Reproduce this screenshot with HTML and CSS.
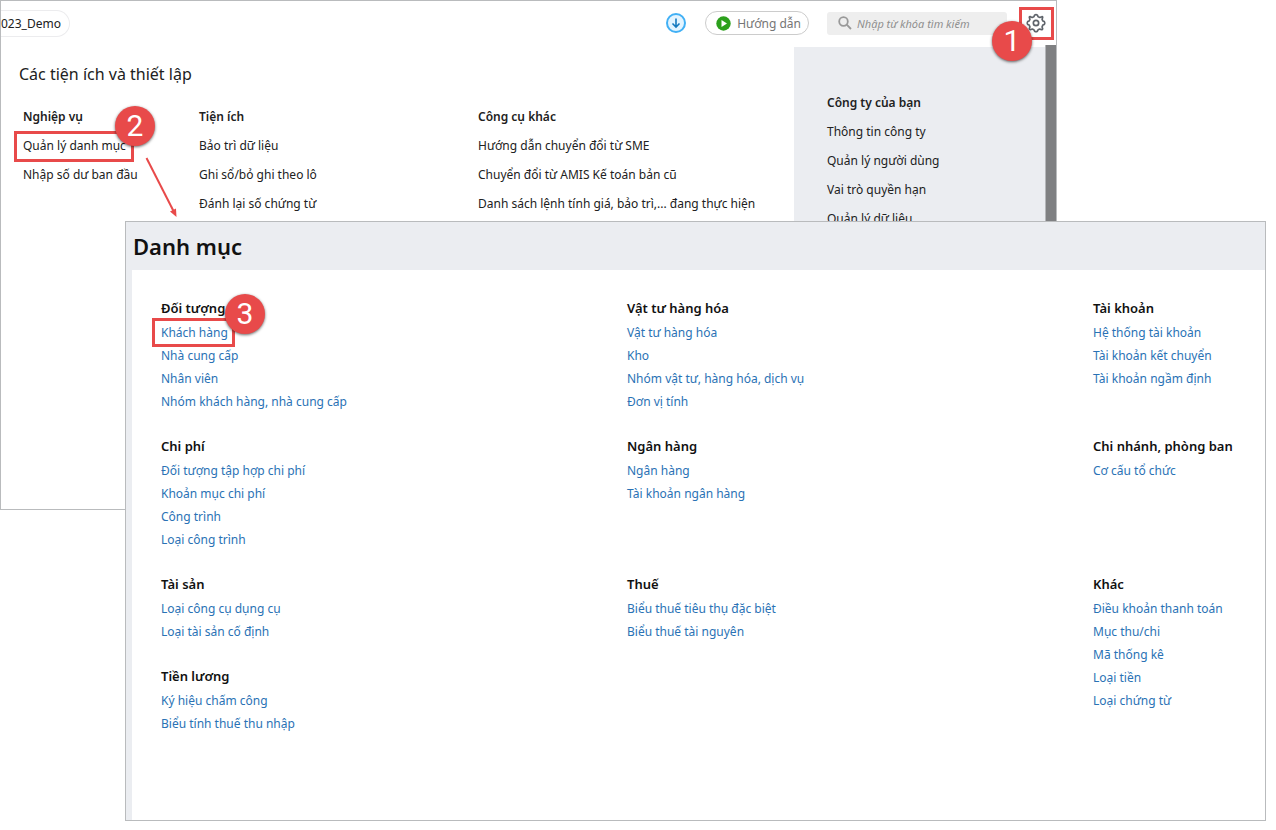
FILE: index.html
```html
<!DOCTYPE html>
<html lang="vi">
<head>
    <meta charset="UTF-8">
    <meta name="viewport" content="width=device-width, initial-scale=1.0">
    <title>Danh mục</title>
    <link rel="stylesheet" href="styles.css">
</head>
<body>

<div class="window settings-window">
    <header class="topbar">
        <span class="company">023_Demo</span>
        <button class="download" aria-label="Tải về">
            <svg width="22" height="22" viewBox="0 0 22 22" fill="none">
                <circle cx="11" cy="11" r="9" fill="#e3f4ff" stroke="#41b0f5" stroke-width="2"/>
                <path d="M11 6.500v8.500M7.500 11.500l3.500 3.500 3.500-3.500" stroke="#1479be" stroke-width="1.600"/>
            </svg>
        </button>
        <button class="guide">
            <svg width="15" height="15" viewBox="0 0 15 15">
                <circle cx="7.500" cy="7.500" r="7.200" fill="#2ca01c"/>
                <path d="M5.500 4v7l5.500-3.500z" fill="#fff"/>
            </svg>
            Hướng dẫn
        </button>
        <div class="search">
            <svg width="14" height="14" viewBox="0 0 14 14" fill="none" stroke="#999" stroke-width="1.800">
                <circle cx="5.500" cy="5.500" r="4.300"/>
                <path d="M8.700 8.700l4.300 4.300"/>
            </svg>
            <input type="text" placeholder="Nhập từ khóa tìm kiếm" aria-label="Tìm kiếm">
        </div>
        <div class="gear-wrap">
            <button class="gear" aria-label="Thiết lập">
                <svg width="20" height="20" viewBox="0 0 24 24" fill="none" stroke="#5f646b" stroke-width="2" stroke-linejoin="round">
                    <circle cx="12" cy="12" r="3.200"/>
                    <path d="M10.300 2.500Q12 1.200 13.700 2.500L14.500 4.500L16.700 5.300L18.800 4.500Q20 4 20 5.500L19.300 7.600L20.200 9.500L22 10.300Q23 12 22 13.700L20.200 14.500L19.300 16.700L20 18.800Q20 20 18.500 20L16.500 19.200L14.500 20.200L13.700 21.800Q12 22.800 10.300 21.800L9.500 20.200L7.500 19.200L5.300 20Q4 20 4 18.600L4.700 16.700L3.800 14.500L2 13.700Q1 12 2 10.300L3.800 9.500L4.700 7.600L4 5.500Q4 4 5.300 4.400L7.400 5.300L9.500 4.500z"/>
                </svg>
            </button>
            <span class="mark mark-gear"></span>
            <span class="badge badge-1">1</span>
        </div>
    </header>

    <div class="settings-body">
        <main class="utilities">
            <h1>Các tiện ích và thiết lập</h1>
            <div class="utility-cols">
                <section class="menu">
                    <h2>Nghiệp vụ</h2>
                    <ul>
                        <li class="anchor">
                            <a href="#">Quản lý danh mục</a>
                            <span class="mark mark-category"></span>
                            <span class="badge badge-2">2</span>
                            <svg class="arrow" width="34" height="62" viewBox="0 0 34 62">
                                <path d="M1.500 1L28.500 54" stroke="#e84a4a" stroke-width="2"/>
                                <path d="M25 54.500L31 51.500L31.500 60z" fill="#e84a4a"/>
                            </svg>
                        </li>
                        <li><a href="#">Nhập số dư ban đầu</a></li>
                    </ul>
                </section>
                <section class="menu">
                    <h2>Tiện ích</h2>
                    <ul>
                        <li><a href="#">Bảo trì dữ liệu</a></li>
                        <li><a href="#">Ghi sổ/bỏ ghi theo lô</a></li>
                        <li><a href="#">Đánh lại số chứng từ</a></li>
                    </ul>
                </section>
                <section class="menu">
                    <h2>Công cụ khác</h2>
                    <ul>
                        <li><a href="#">Hướng dẫn chuyển đổi từ SME</a></li>
                        <li><a href="#">Chuyển đổi từ AMIS Kế toán bản cũ</a></li>
                        <li><a href="#">Danh sách lệnh tính giá, bảo trì,... đang thực hiện</a></li>
                    </ul>
                </section>
            </div>
        </main>
        <aside class="your-company menu">
            <h2>Công ty của bạn</h2>
            <ul>
                <li><a href="#">Thông tin công ty</a></li>
                <li><a href="#">Quản lý người dùng</a></li>
                <li><a href="#">Vai trò quyền hạn</a></li>
                <li><a href="#">Quản lý dữ liệu</a></li>
            </ul>
        </aside>
        <div class="scroll-strip"></div>
    </div>
</div>

<div class="window category-window">
    <h1>Danh mục</h1>
    <div class="categories">
        <section>
            <h2>Đối tượng</h2>
            <ul>
                <li class="anchor">
                    <a href="#">Khách hàng</a>
                    <span class="mark mark-customer"></span>
                    <span class="badge badge-3">3</span>
                </li>
                <li><a href="#">Nhà cung cấp</a></li>
                <li><a href="#">Nhân viên</a></li>
                <li><a href="#">Nhóm khách hàng, nhà cung cấp</a></li>
            </ul>
        </section>
        <section>
            <h2>Vật tư hàng hóa</h2>
            <ul>
                <li><a href="#">Vật tư hàng hóa</a></li>
                <li><a href="#">Kho</a></li>
                <li><a href="#">Nhóm vật tư, hàng hóa, dịch vụ</a></li>
                <li><a href="#">Đơn vị tính</a></li>
            </ul>
        </section>
        <section>
            <h2>Tài khoản</h2>
            <ul>
                <li><a href="#">Hệ thống tài khoản</a></li>
                <li><a href="#">Tài khoản kết chuyển</a></li>
                <li><a href="#">Tài khoản ngầm định</a></li>
            </ul>
        </section>
        <section>
            <h2>Chi phí</h2>
            <ul>
                <li><a href="#">Đối tượng tập hợp chi phí</a></li>
                <li><a href="#">Khoản mục chi phí</a></li>
                <li><a href="#">Công trình</a></li>
                <li><a href="#">Loại công trình</a></li>
            </ul>
        </section>
        <section>
            <h2>Ngân hàng</h2>
            <ul>
                <li><a href="#">Ngân hàng</a></li>
                <li><a href="#">Tài khoản ngân hàng</a></li>
            </ul>
        </section>
        <section>
            <h2>Chi nhánh, phòng ban</h2>
            <ul>
                <li><a href="#">Cơ cấu tổ chức</a></li>
            </ul>
        </section>
        <section>
            <h2>Tài sản</h2>
            <ul>
                <li><a href="#">Loại công cụ dụng cụ</a></li>
                <li><a href="#">Loại tài sản cố định</a></li>
            </ul>
        </section>
        <section>
            <h2>Thuế</h2>
            <ul>
                <li><a href="#">Biểu thuế tiêu thụ đặc biệt</a></li>
                <li><a href="#">Biểu thuế tài nguyên</a></li>
            </ul>
        </section>
        <section class="tall">
            <h2>Khác</h2>
            <ul>
                <li><a href="#">Điều khoản thanh toán</a></li>
                <li><a href="#">Mục thu/chi</a></li>
                <li><a href="#">Mã thống kê</a></li>
                <li><a href="#">Loại tiền</a></li>
                <li><a href="#">Loại chứng từ</a></li>
            </ul>
        </section>
        <section>
            <h2>Tiền lương</h2>
            <ul>
                <li><a href="#">Ký hiệu chấm công</a></li>
                <li><a href="#">Biểu tính thuế thu nhập</a></li>
            </ul>
        </section>
    </div>
</div>

</body>
</html>
```
FILE: styles.css
```css
* {
    box-sizing: border-box;
}

body {
    margin: 0;
    position: relative;
    min-height: 100vh;
    background: #fff;
    color: #212121;
    font-family: "Noto Sans", sans-serif;
    font-size: 12px;
}

h1, h2, ul {
    margin: 0;
    padding: 0;
}

ul {
    list-style: none;
}

a {
    color: inherit;
    text-decoration: none;
}

a:hover {
    text-decoration: underline;
}

button {
    padding: 0;
    border: none;
    background: none;
    font: inherit;
    cursor: pointer;
}

.window {
    background: #fff;
    border: 1px solid #b9bbbd;
}

/* Settings window */
.settings-window {
    display: flex;
    flex-direction: column;
    width: calc(100% - 219px);
    min-height: 510px;
}

.topbar {
    display: flex;
    align-items: center;
    height: 44px;
}

.company {
    height: 27px;
    margin-right: auto;
    padding-right: 8px;
    border: 1px solid #ececee;
    border-left: none;
    border-radius: 0 14px 14px 0;
    line-height: 26px;
}

.download {
    display: flex;
    margin-right: 18px;
}

.guide {
    display: flex;
    align-items: center;
    gap: 6px;
    height: 24px;
    margin-right: 18px;
    padding: 0 7px 0 10px;
    border: 1px solid #ccc;
    border-radius: 12px;
    color: #757575;
    white-space: nowrap;
}

.search {
    display: flex;
    align-items: center;
    gap: 5px;
    width: 180px;
    height: 23px;
    padding-left: 11px;
    border-radius: 3px;
    background: #eee;
}

.search input {
    flex: 1;
    min-width: 0;
    padding: 0;
    border: none;
    outline: none;
    background: none;
    font: italic 11px "Noto Sans", sans-serif;
}

.search input::placeholder {
    color: #8f8f8f;
}

.gear-wrap {
    position: relative;
    margin: 0 10px 0 19px;
}

.gear {
    display: flex;
}

.settings-body {
    display: flex;
    flex: 1;
}

.utilities {
    flex: 1;
    padding: 17px 0 0 18px;
}

.utilities h1 {
    font-size: 16px;
    font-weight: 400;
    line-height: 24px;
}

.utility-cols {
    display: grid;
    grid-template-columns: 176px 279px 1fr;
    margin-top: 16px;
    padding-left: 4px;
}

.menu h2 {
    font-size: 12px;
    font-weight: 600;
    line-height: 29px;
}

.menu li {
    line-height: 29px;
    white-space: nowrap;
}

.your-company {
    width: 252px;
    margin-top: 2px;
    padding: 41px 0 0 33px;
    background: #ebedf1;
}

.scroll-strip {
    width: 11px;
    margin-left: -1px;
    background: #7f8082;
    border-left: 1px solid #b4b6b9;
}

/* Category window */
.category-window {
    position: absolute;
    top: 221px;
    right: 10px;
    bottom: 9px;
    left: 125px;
    display: flex;
    flex-direction: column;
    padding-left: 6px;
    background: #ebedf1;
}

.category-window h1 {
    padding-left: 1px;
    color: #111;
    font-size: 22px;
    font-weight: 600;
    line-height: 48px;
}

.categories {
    flex: 1;
    display: grid;
    grid-template-columns: 1fr 1fr 140px;
    align-content: start;
    row-gap: 21px;
    padding: 26px 32px 0 29px;
    background: #fff;
}

.categories h2 {
    color: #111;
    font-size: 13px;
    font-weight: 600;
    line-height: 25px;
    white-space: nowrap;
}

.categories li {
    line-height: 23px;
    color: #2a72b5;
}

.categories .tall {
    grid-row: span 2;
}

/* Step markers */
.anchor {
    position: relative;
}

.mark {
    position: absolute;
    border: 3px solid #e84a4a;
    pointer-events: none;
}

.mark-gear {
    top: -6px;
    left: -7px;
    width: 35px;
    height: 33px;
}

.mark-category {
    top: 0;
    left: -9px;
    width: 120px;
    height: 31px;
}

.mark-customer {
    top: -3px;
    left: -9px;
    width: 83px;
    height: 29px;
}

.badge {
    position: absolute;
    width: 40px;
    height: 40px;
    border-radius: 50%;
    background: #e84a4a;
    box-shadow: 0 1px 3px rgba(0, 0, 0, 0.6);
    color: #fff;
    font: 30px/40px Roboto, sans-serif;
    text-align: center;
}

.badge-1 {
    top: 8px;
    left: -34px;
}

.badge-2 {
    top: -25px;
    left: 92px;
}

.badge-3 {
    top: -27px;
    left: 64px;
}

.arrow {
    position: absolute;
    top: 26px;
    left: 122px;
}
```
